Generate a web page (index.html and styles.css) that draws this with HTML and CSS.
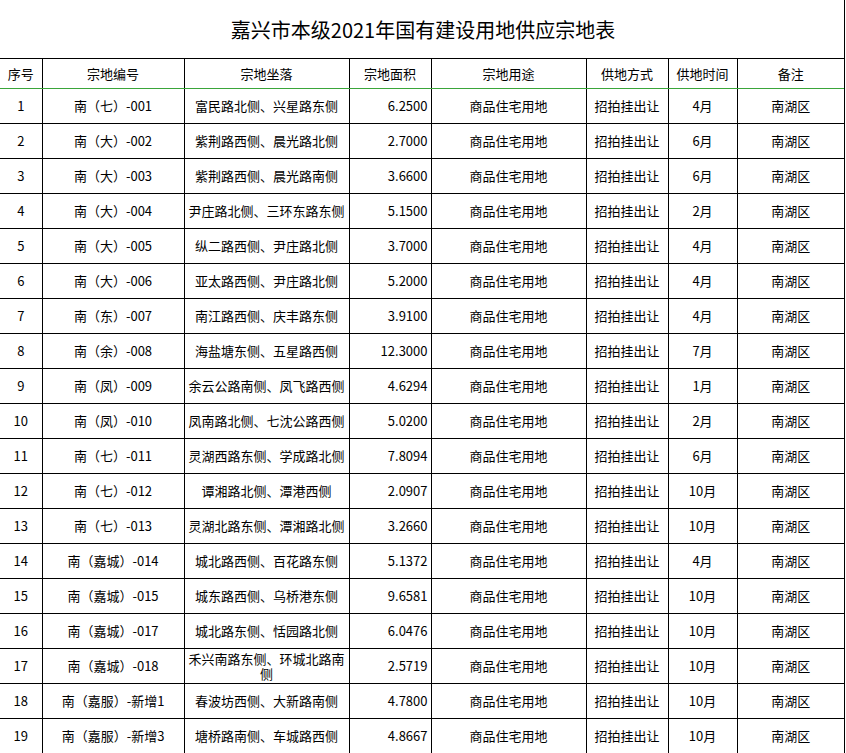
FILE: index.html
```html
<!DOCTYPE html>
<html lang="zh-CN">
<head>
<meta charset="utf-8">
<title>嘉兴市本级2021年国有建设用地供应宗地表</title>
<link rel="stylesheet" href="styles.css">
</head>
<body>
<div class="sheet">
  <div class="title">嘉兴市本级2021年国有建设用地供应宗地表</div>
  <table class="land">
    <colgroup>
      <col class="c1"><col class="c2"><col class="c3"><col class="c4"><col class="c5"><col class="c6"><col class="c7"><col class="c8">
    </colgroup>
    <thead>
      <tr><th>序号</th><th>宗地编号</th><th>宗地坐落</th><th>宗地面积</th><th>宗地用途</th><th>供地方式</th><th>供地时间</th><th>备注</th></tr>
    </thead>
    <tbody>
      <tr><td>1</td><td>南（七）-001</td><td>富民路北侧、兴星路东侧</td><td class="num">6.2500</td><td>商品住宅用地</td><td>招拍挂出让</td><td>4月</td><td>南湖区</td></tr>
      <tr><td>2</td><td>南（大）-002</td><td>紫荆路西侧、晨光路北侧</td><td class="num">2.7000</td><td>商品住宅用地</td><td>招拍挂出让</td><td>6月</td><td>南湖区</td></tr>
      <tr><td>3</td><td>南（大）-003</td><td>紫荆路西侧、晨光路南侧</td><td class="num">3.6600</td><td>商品住宅用地</td><td>招拍挂出让</td><td>6月</td><td>南湖区</td></tr>
      <tr><td>4</td><td>南（大）-004</td><td>尹庄路北侧、三环东路东侧</td><td class="num">5.1500</td><td>商品住宅用地</td><td>招拍挂出让</td><td>2月</td><td>南湖区</td></tr>
      <tr><td>5</td><td>南（大）-005</td><td>纵二路西侧、尹庄路北侧</td><td class="num">3.7000</td><td>商品住宅用地</td><td>招拍挂出让</td><td>4月</td><td>南湖区</td></tr>
      <tr><td>6</td><td>南（大）-006</td><td>亚太路西侧、尹庄路北侧</td><td class="num">5.2000</td><td>商品住宅用地</td><td>招拍挂出让</td><td>4月</td><td>南湖区</td></tr>
      <tr><td>7</td><td>南（东）-007</td><td>南江路西侧、庆丰路东侧</td><td class="num">3.9100</td><td>商品住宅用地</td><td>招拍挂出让</td><td>4月</td><td>南湖区</td></tr>
      <tr><td>8</td><td>南（余）-008</td><td>海盐塘东侧、五星路西侧</td><td class="num">12.3000</td><td>商品住宅用地</td><td>招拍挂出让</td><td>7月</td><td>南湖区</td></tr>
      <tr><td>9</td><td>南（凤）-009</td><td>余云公路南侧、凤飞路西侧</td><td class="num">4.6294</td><td>商品住宅用地</td><td>招拍挂出让</td><td>1月</td><td>南湖区</td></tr>
      <tr><td>10</td><td>南（凤）-010</td><td>凤南路北侧、七沈公路西侧</td><td class="num">5.0200</td><td>商品住宅用地</td><td>招拍挂出让</td><td>2月</td><td>南湖区</td></tr>
      <tr><td>11</td><td>南（七）-011</td><td>灵湖西路东侧、学成路北侧</td><td class="num">7.8094</td><td>商品住宅用地</td><td>招拍挂出让</td><td>6月</td><td>南湖区</td></tr>
      <tr><td>12</td><td>南（七）-012</td><td>谭湘路北侧、潭港西侧</td><td class="num">2.0907</td><td>商品住宅用地</td><td>招拍挂出让</td><td>10月</td><td>南湖区</td></tr>
      <tr><td>13</td><td>南（七）-013</td><td>灵湖北路东侧、潭湘路北侧</td><td class="num">3.2660</td><td>商品住宅用地</td><td>招拍挂出让</td><td>10月</td><td>南湖区</td></tr>
      <tr><td>14</td><td>南（嘉城）-014</td><td>城北路西侧、百花路东侧</td><td class="num">5.1372</td><td>商品住宅用地</td><td>招拍挂出让</td><td>4月</td><td>南湖区</td></tr>
      <tr><td>15</td><td>南（嘉城）-015</td><td>城东路西侧、乌桥港东侧</td><td class="num">9.6581</td><td>商品住宅用地</td><td>招拍挂出让</td><td>10月</td><td>南湖区</td></tr>
      <tr><td>16</td><td>南（嘉城）-017</td><td>城北路东侧、恬园路北侧</td><td class="num">6.0476</td><td>商品住宅用地</td><td>招拍挂出让</td><td>10月</td><td>南湖区</td></tr>
      <tr><td>17</td><td>南（嘉城）-018</td><td class="wrap">禾兴南路东侧、环城北路南侧</td><td class="num">2.5719</td><td>商品住宅用地</td><td>招拍挂出让</td><td>10月</td><td>南湖区</td></tr>
      <tr><td>18</td><td>南（嘉服）-新增1</td><td>春波坊西侧、大新路南侧</td><td class="num">4.7800</td><td>商品住宅用地</td><td>招拍挂出让</td><td>10月</td><td>南湖区</td></tr>
      <tr><td>19</td><td>南（嘉服）-新增3</td><td>塘桥路南侧、车城路西侧</td><td class="num">4.8667</td><td>商品住宅用地</td><td>招拍挂出让</td><td>10月</td><td>南湖区</td></tr>
    </tbody>
  </table>
</div>
</body>
</html>
```
FILE: styles.css
```css
html, body {
  margin: 0;
  padding: 0;
  background: #ffffff;
}
body {
  font-family: "Noto Sans CJK SC", "Noto Sans", sans-serif;
  color: #000000;
}
.sheet {
  width: 845px;
  height: 753px;
  overflow: hidden;
  box-sizing: border-box;
  border-right: 1px solid #000;
}
.title {
  height: 58px;
  box-sizing: border-box;
  padding-top: 17px;
  font-size: 20px;
  line-height: 26px;
  text-align: center;
  padding-left: 2px;
}
.land {
  border-collapse: collapse;
  table-layout: fixed;
  width: 844px;
  font-size: 13px;
}
.c1 { width: 42px; }
.c2 { width: 142px; }
.c3 { width: 165px; }
.c4 { width: 82px; }
.c5 { width: 155px; }
.c6 { width: 82px; }
.c7 { width: 69px; }
.c8 { width: 107px; }
.land th,
.land td {
  border: 1px solid #000;
  padding: 0 2px;
  text-align: center;
  vertical-align: middle;
  font-weight: 400;
  line-height: 15px;
  white-space: nowrap;
  overflow: hidden;
}
.land th:first-child,
.land td:first-child {
  border-left: none;
}
.land th:last-child,
.land td:last-child {
  border-right: none;
}
.land thead th {
  border-top: 1px solid #000;
  border-bottom: 1px solid #3aa53a;
  height: 29px;
}
.land tbody td {
  height: 33px;
  padding-bottom: 1px;
}
.land td.num {
  text-align: right;
  padding-right: 3px;
}
.land td.wrap {
  white-space: normal;
  padding: 0 1px 1px;
}
```
